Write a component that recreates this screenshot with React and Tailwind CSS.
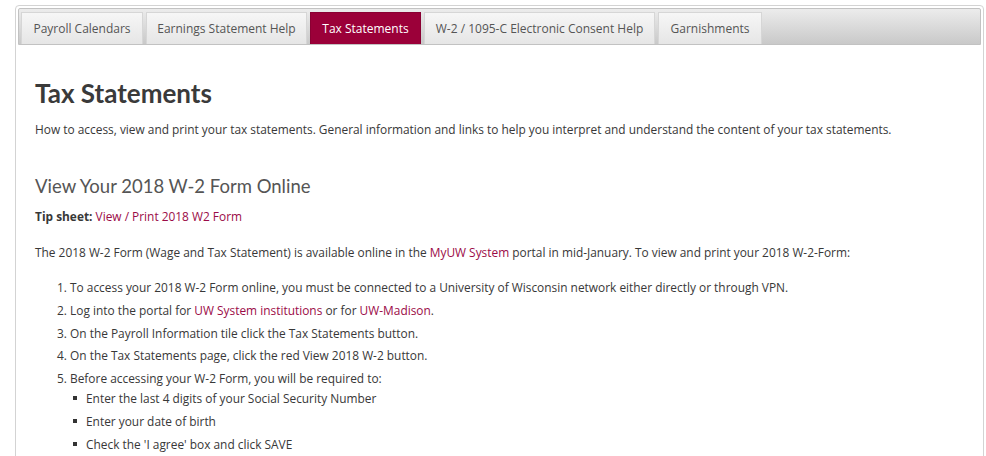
import React from "react";

const tabs = [
  { label: "Payroll Calendars", w: "w-[122px]" },
  { label: "Earnings Statement Help", w: "w-[161px]" },
  { label: "Tax Statements", w: "w-[111px]", active: true },
  { label: "W-2 / 1095-C Electronic Consent Help", w: "w-[231px]" },
  { label: "Garnishments", w: "w-[104px]" },
];

const Link = ({ children }) => (
  <a href="#" className="text-[#9b0b47] no-underline">
    {children}
  </a>
);

const App = () => {
  return (
    <div className="w-[986px] h-[456px] overflow-hidden bg-white font-['Open_Sans',sans-serif] text-[#383838]">
      <div className="ml-[15px] mt-[5px] w-[969px] h-[460px] border border-[#d3d3d3] rounded-[4px] p-[2px]">
        {/* tab strip */}
        <div className="h-[37px] flex items-end gap-[3px] pl-[2px] border border-[#c2c2c2] rounded-t-[2px] bg-gradient-to-b from-[#ececec] to-[#c9c9c9]">
          {tabs.map((t) =>
            t.active ? (
              <div
                key={t.label}
                className={`${t.w} h-[32px] flex items-center justify-center text-[12px] text-white bg-[#9b0039] border border-b-0 border-[#8a0033]`}
              >
                {t.label}
              </div>
            ) : (
              <div
                key={t.label}
                className={`${t.w} h-[32px] flex items-center justify-center text-[12px] text-[#555] bg-gradient-to-b from-[#f6f6f6] to-[#e6e6e6] border border-b-0 border-[#d6d6d6]`}
              >
                {t.label}
              </div>
            )
          )}
        </div>

        {/* panel body */}
        <div className="pl-[17px] pr-4 text-[11.9px] leading-[20px]">
          <h1 className="mt-[33px] text-[26px] leading-[30px] font-bold text-[#3a3a3a] font-['Lato',sans-serif]">
            Tax Statements
          </h1>
          <p className="mt-[11px]">
            How to access, view and print your tax statements. General information and links to help you interpret and understand the content of your tax statements.
          </p>

          <h2 className="mt-[34px] text-[18.5px] leading-[26px] text-[#555] font-['Lato',sans-serif]">
            View Your 2018 W-2 Form Online
          </h2>
          <p className="mt-[7px]">
            <span className="font-bold">Tip sheet:</span> <Link>View / Print 2018 W2 Form</Link>
          </p>
          <p className="mt-[16px]">
            The 2018 W-2 Form (Wage and Tax Statement) is available online in the <Link>MyUW System</Link> portal in mid-January. To view and print your 2018 W-2-Form:
          </p>

          <ol className="mt-[15px] pl-[22px] list-decimal list-inside">
            <li className="mb-[2.75px]">
              To access your 2018 W-2 Form online, you must be connected to a University of Wisconsin network either directly or through VPN.
            </li>
            <li className="mb-[2.75px]">
              Log into the portal for <Link>UW System institutions</Link> or for <Link>UW-Madison</Link>.
            </li>
            <li className="mb-[2.75px]">On the Payroll Information tile click the Tax Statements button.</li>
            <li className="mb-[2.75px]">On the Tax Statements page, click the red View 2018 W-2 button.</li>
            <li>
              Before accessing your W-2 Form, you will be required to:
              <ul className="-mt-[2px] pl-[16px]">
                {[
                  "Enter the last 4 digits of your Social Security Number",
                  "Enter your date of birth",
                  "Check the 'I agree' box and click SAVE",
                ].map((s) => (
                  <li key={s} className="flex items-center gap-[9px] h-[23px]">
                    <span className="w-[4px] h-[4px] bg-[#333] shrink-0" />
                    {s}
                  </li>
                ))}
              </ul>
            </li>
          </ol>
        </div>
      </div>
    </div>
  );
};

export default App;
